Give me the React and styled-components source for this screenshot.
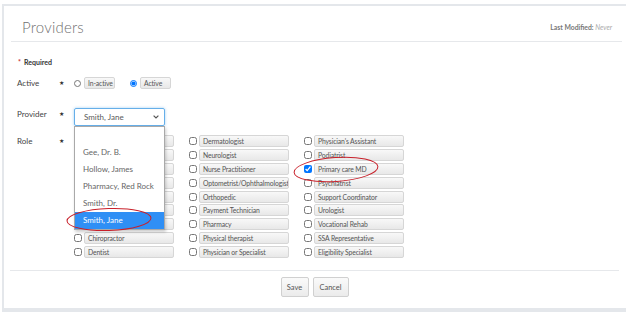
import React from "react";
import styled, { createGlobalStyle } from "styled-components";

const GlobalStyle = createGlobalStyle`
  body {
    margin: 0;
    background: #fff;
    font-family: Lato, "Open Sans", "Liberation Sans", sans-serif;
  }
`;

const Frame = styled.div`
  position: relative;
  width: 622px;
  margin: 4px 0 0 2px;
  background: #fff;
  border-top: 2px solid #e4e7eb;
  border-left: 2px solid #e4e7eb;
  border-bottom: 4px solid #e4e7eb;
  height: 302px;
  box-sizing: content-box;
`;

const Header = styled.div`
  display: flex;
  align-items: center;
  justify-content: space-between;
  box-sizing: border-box;
  height: 36px;
  padding-top: 6px;
  margin: 0 4px 0 7px;
  border-bottom: 1px solid #e6e8eb;
`;

const Title = styled.h1`
  margin: 0 0 0 11px;
  font-size: 15px;
  font-weight: 300;
  color: #707070;
  letter-spacing: 0.2px;
`;

const Modified = styled.div`
  margin-right: 10px;
  font-size: 6.8px;
  color: #777;
  b {
    font-weight: 700;
  }
  i {
    color: #aaa;
  }
`;

const Body = styled.div`
  padding: 15px 0 0 13px;
`;

const Required = styled.div`
  font-size: 7px;
  font-weight: 700;
  color: #333;
  line-height: 10px;
  span {
    color: #c9302c;
    margin: 0 3px 0 1px;
  }
`;

const Row = styled.div`
  display: grid;
  grid-template-columns: 42px 15px auto;
  align-items: start;
  margin-top: ${(p) => p.$top}px;
`;

const Label = styled.div`
  font-size: 8px;
  line-height: 12px;
  color: #444;
`;

const Star = styled.div`
  font-size: 6px;
  line-height: 12px;
  color: #333;
`;

const RadioGroup = styled.div`
  display: flex;
  align-items: center;
`;

const Radio = styled.input`
  width: 7px;
  height: 7px;
  margin: 0 3px 0 ${(p) => p.$left}px;
`;

const Pill = styled.span`
  display: inline-flex;
  align-items: center;
  box-sizing: border-box;
  height: 12px;
  width: ${(p) => p.$w}px;
  padding-left: 3px;
  font-size: 6.8px;
  letter-spacing: -0.12px;
  color: #555;
  white-space: nowrap;
  overflow: hidden;
  background: linear-gradient(#f8f8f8, #e8e8e8);
  border: 1px solid #d6d6d6;
  border-radius: 2px;
`;

const SelectWrap = styled.div`
  position: relative;
  width: 91px;
`;

const Select = styled.div`
  box-sizing: border-box;
  height: 18px;
  display: flex;
  align-items: center;
  justify-content: space-between;
  padding: 0 5px 0 9px;
  font-size: 8px;
  color: #5a5a5a;
  border: 1px solid #66afe9;
  border-radius: 2px;
  box-shadow: 0 0 3px rgba(102, 175, 233, 0.6);
`;

const Menu = styled.ul`
  position: absolute;
  z-index: 2;
  top: 18px;
  left: 0;
  width: 91px;
  margin: 0;
  padding: 0;
  list-style: none;
  box-sizing: border-box;
  background: #fff;
  border: 1px solid #a9a9a9;
  box-shadow: 1px 2px 3px rgba(0, 0, 0, 0.2);
`;

const Option = styled.li`
  height: 17px;
  line-height: 17px;
  padding-left: 8px;
  font-size: 8px;
  color: ${(p) => (p.$active ? "#fff" : "#666")};
  background: ${(p) => (p.$active ? "#2f8ff5" : "#fff")};
`;

const RoleGrid = styled.div`
  display: grid;
  grid-template-columns: repeat(3, 100px);
  grid-auto-flow: column;
  grid-template-rows: repeat(9, 12px);
  column-gap: 15px;
  row-gap: 1.9px;
`;

const Cell = styled.label`
  display: flex;
  align-items: center;
`;

const Check = styled.input`
  width: 8px;
  height: 8px;
  margin: 0 2px 0 0;
`;

const Footer = styled.div`
  margin: 12px 7px 0 6px;
  border-top: 1px solid #e6e8eb;
  display: flex;
  justify-content: center;
  gap: 4px;
  padding-top: 6px;
`;

const Button = styled.button`
  height: 20px;
  width: ${(p) => p.$w}px;
  padding: 0;
  font-family: inherit;
  font-size: 7.5px;
  color: #555;
  background: linear-gradient(#fafafa, #ebebeb);
  border: 1px solid #d0d0d0;
  border-radius: 2px;
`;

const Mark = styled.svg`
  position: absolute;
  z-index: 3;
  left: ${(p) => p.$x}px;
  top: ${(p) => p.$y}px;
  overflow: visible;
`;

const roles = [
  "Acupuncturist",
  "Administrator",
  "Attorney",
  "Audiologist",
  "Case Manager",
  "Chemical Dependency",
  "Child Psychologist",
  "Chiropractor",
  "Dentist",
  "Dermatologist",
  "Neurologist",
  "Nurse Practitioner",
  "Optometrist/Ophthalmologist",
  "Orthopedic",
  "Payment Technician",
  "Pharmacy",
  "Physical therapist",
  "Physician or Specialist",
  "Physician's Assistant",
  "Podiatrist",
  "Primary care MD",
  "Psychiatrist",
  "Support Coordinator",
  "Urologist",
  "Vocational Rehab",
  "SSA Representative",
  "Eligibility Specialist",
];

const providers = ["", "Gee, Dr. B.", "Hollow, James", "Pharmacy, Red Rock", "Smith, Dr.", "Smith, Jane"];

export default function App() {
  return (
    <>
      <GlobalStyle />
      <Frame>
        <Header>
          <Title>Providers</Title>
          <Modified>
            <b>Last Modified:</b> <i>Never</i>
          </Modified>
        </Header>
        <Body>
          <Required>
            <span>*</span>Required
          </Required>
          <Row $top={10}>
            <Label>Active</Label>
            <Star>★</Star>
            <RadioGroup>
              <Radio type="radio" name="active" $left={0} />
              <Pill $w={31}>In-active</Pill>
              <Radio type="radio" name="active" defaultChecked $left={15} />
              <Pill $w={31}>Active</Pill>
            </RadioGroup>
          </Row>
          <Row $top={19}>
            <Label>Provider</Label>
            <Star>★</Star>
            <SelectWrap>
              <Select>
                Smith, Jane
                <svg width="6" height="4" viewBox="0 0 6 4">
                  <path d="M0.6 0.6 L3 3 L5.4 0.6" fill="none" stroke="#555" strokeWidth="1.2" />
                </svg>
              </Select>
              <Menu>
                {providers.map((p, i) => (
                  <Option key={i} $active={p === "Smith, Jane"}>
                    {p}
                  </Option>
                ))}
              </Menu>
            </SelectWrap>
          </Row>
          <Row $top={9}>
            <Label>Role</Label>
            <Star>★</Star>
            <RoleGrid>
              {roles.map((r) => (
                <Cell key={r}>
                  <Check type="checkbox" defaultChecked={r === "Primary care MD"} />
                  <Pill $w={90}>{r}</Pill>
                </Cell>
              ))}
            </RoleGrid>
          </Row>
        </Body>
        <Footer>
          <Button $w={28}>Save</Button>
          <Button $w={36}>Cancel</Button>
        </Footer>
        <Mark $x={62} $y={201} width="86" height="24">
          <ellipse cx="43" cy="12.5" rx="42" ry="11" fill="none" stroke="#c8202a" strokeWidth="1" transform="rotate(-2 43 12.5)" />
        </Mark>
        <Mark $x={289} $y={151} width="86" height="26">
          <ellipse cx="43" cy="12.5" rx="42" ry="12" fill="none" stroke="#c8202a" strokeWidth="1" transform="rotate(-4 43 12.5)" />
        </Mark>
      </Frame>
    </>
  );
}
